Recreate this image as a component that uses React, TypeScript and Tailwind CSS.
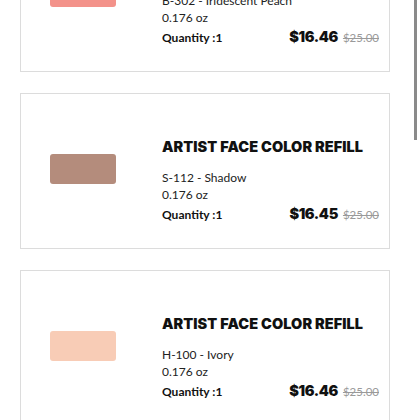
import React from "react";

type Item = { code: string; color: string; price: string };

const items: Item[] = [
  { code: "B-302 - Iridescent Peach", color: "#f3928a", price: "$16.46" },
  { code: "S-112 - Shadow", color: "#b48c7c", price: "$16.45" },
  { code: "H-100 - Ivory", color: "#f8ccb6", price: "$16.46" },
];

const heavy = { fontFamily: "Inter, 'Noto Sans', sans-serif" };

function Card({ item }: { item: Item }) {
  return (
    <div className="flex h-[156px] w-[370px] shrink-0 border border-[#dcdcdc] bg-white">
      <div className="ml-[29px] mt-[60px] h-[30px] w-[66px] shrink-0 rounded-[3px]" style={{ backgroundColor: item.color }} />
      <div className="ml-[46px] flex flex-1 flex-col pr-[10px] pt-[43px]">
        <div className="h-[20px] whitespace-nowrap text-[14.5px] font-black leading-[20px] tracking-[0.05px] text-[#111]" style={heavy}>
          ARTIST FACE COLOR REFILL
        </div>
        <div className="mt-[12px] text-[12px] leading-[17px] text-[#222]">{item.code}</div>
        <div className="text-[12px] leading-[17px] text-[#222]">0.176 oz</div>
        <div className="mt-[2px] flex items-baseline justify-between">
          <span className="text-[12px] font-bold leading-[17px] text-[#111]">Quantity :1</span>
          <span className="flex items-baseline gap-[5px]">
            <span className="text-[14.5px] font-black leading-[17px] tracking-[-0.4px] text-[#111]" style={heavy}>{item.price}</span>
            <span className="text-[11.5px] leading-[17px] text-[#9a9a9a] line-through">$25.00</span>
          </span>
        </div>
      </div>
    </div>
  );
}

export default function App() {
  return (
    <div
      className="relative h-[420px] w-[420px] overflow-hidden bg-white"
      style={{ fontFamily: "Lato, 'Noto Sans', sans-serif" }}
    >
      <div className="mt-[-84px] flex flex-col gap-[21px] pl-[20px]">
        {items.map((it, i) => (
          <Card key={i} item={it} />
        ))}
      </div>
      <div className="absolute left-[414px] top-0 h-[140px] w-[3px] bg-[#8a8a8a]" />
    </div>
  );
}
